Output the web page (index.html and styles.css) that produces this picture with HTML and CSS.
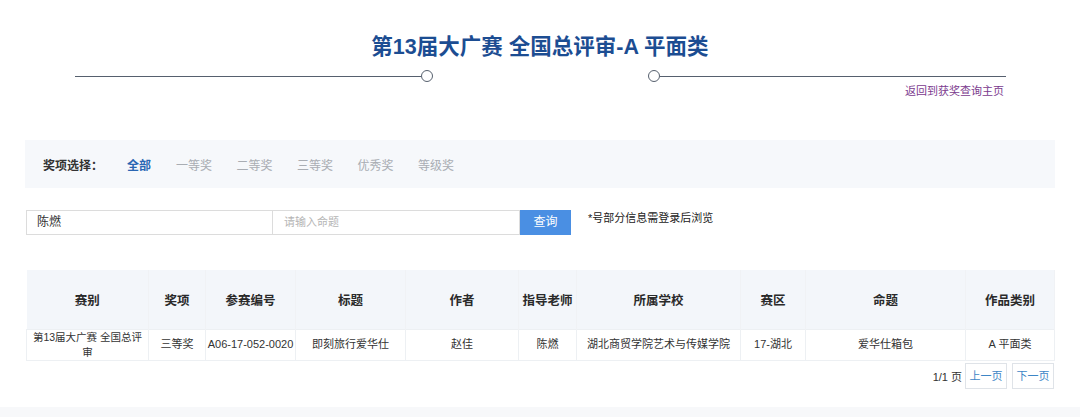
FILE: index.html
```html
<!DOCTYPE html>
<html lang="zh">
<head>
<meta charset="utf-8">
<link rel="stylesheet" href="styles.css">
</head>
<body>
<div class="page">
  <header class="head">
    <h1 class="title">第13届大广赛 全国总评审-A 平面类</h1>
    <div class="deco">
      <span class="line"></span><span class="dot"></span><span class="gap"></span><span class="dot"></span><span class="line"></span>
    </div>
    <div class="back"><a href="#">返回到获奖查询主页</a></div>
  </header>

  <div class="filter">
    <span class="flabel">奖项选择：</span>
    <span class="fitem active">全部</span>
    <span class="fitem">一等奖</span>
    <span class="fitem">二等奖</span>
    <span class="fitem">三等奖</span>
    <span class="fitem">优秀奖</span>
    <span class="fitem">等级奖</span>
  </div>

  <div class="search">
    <div class="inp">陈燃</div>
    <div class="inp ph">请输入命题</div>
    <div class="btn">查询</div>
    <div class="note">*号部分信息需登录后浏览</div>
  </div>

  <table class="tbl">
    <colgroup>
      <col style="width:122px"><col style="width:57px"><col style="width:90px"><col style="width:110px"><col style="width:113px"><col style="width:58px"><col style="width:164px"><col style="width:65px"><col style="width:160px"><col style="width:89px">
    </colgroup>
    <thead>
      <tr><th>赛别</th><th>奖项</th><th>参赛编号</th><th>标题</th><th>作者</th><th>指导老师</th><th>所属学校</th><th>赛区</th><th>命题</th><th>作品类别</th></tr>
    </thead>
    <tbody>
      <tr><td class="wrap">第13届大广赛 全国总评审</td><td>三等奖</td><td class="nw">A06-17-052-0020</td><td>即刻旅行爱华仕</td><td>赵佳</td><td>陈燃</td><td>湖北商贸学院艺术与传媒学院</td><td>17-湖北</td><td>爱华仕箱包</td><td>A 平面类</td></tr>
    </tbody>
  </table>

  <div class="pager">
    <span class="pinfo">1/1 页</span>
    <span class="pbtn">上一页</span>
    <span class="pbtn">下一页</span>
  </div>
</div>
<div class="foot"></div>
</body>
</html>
```

FILE: styles.css
```css
* { box-sizing: border-box; }
html, body { margin: 0; padding: 0; background: #fff; }
body {
  font-family: "Liberation Sans", "Noto Sans CJK SC", sans-serif;
  color: #333;
  width: 1080px;
  height: 417px;
  overflow: hidden;
  position: relative;
}
.page { padding: 0 25px; }
.head { padding-top: 32px; }
.title {
  margin: 0;
  text-align: center;
  font-size: 21.5px;
  line-height: 30px;
  font-weight: 700;
  color: #1c4d92;
}
.deco {
  display: flex;
  align-items: center;
  margin: 8px 0 0 50px;
  width: 931px;
  height: 12px;
}
.line { width: 346px; height: 1px; background: #56606e; }
.gap { width: 215px; }
.dot {
  width: 12px; height: 12px;
  border: 1px solid #56606e;
  border-radius: 50%;
  background: #fff;
}
.back {
  width: 979px;
  text-align: right;
  font-size: 11px;
  line-height: 16px;
  margin-top: 1px;
}
.back a { color: #7b3a8e; text-decoration: none; }

.filter {
  margin-top: 41px;
  height: 48px;
  background: #f6f8fb;
  display: flex;
  align-items: center;
  padding-left: 18px;
  font-size: 12px;
}
.flabel { font-weight: 700; color: #333; width: 84px; }
.fitem { color: #a9adb3; width: 60.5px; }
.fitem.active { color: #2a66b3; font-weight: 700; width: 49px; }

.search {
  margin: 22px 1px 0;
  display: flex;
  align-items: flex-start;
  height: 25px;
}
.inp {
  width: 247px; height: 25px;
  border: 1px solid #dcdcdc;
  font-size: 12px;
  line-height: 23px;
  padding-left: 10px;
  color: #333;
}
.inp + .inp { border-left: none; }
.inp.ph { color: #b5b5b5; font-size: 11px; padding-left: 11px; }
.btn {
  width: 51px; height: 25px;
  background: #4a8fe3;
  color: #fff;
  font-size: 12px;
  line-height: 25px;
  text-align: center;
}
.note { margin-left: 17px; font-size: 11px; line-height: 16px; color: #222; }

.tbl {
  margin: 35px 1px 0;
  width: 1028px;
  border-collapse: collapse;
  table-layout: fixed;
  font-size: 11px;
}
.tbl th {
  background: #f3f6fa;
  height: 59px;
  font-weight: 700;
  font-size: 12.5px;
  color: #2a2a2a;
  border-right: 1px solid #f0f2f5;
  padding: 0;
}
.tbl td {
  height: 31px;
  text-align: center;
  color: #333;
  border: 1px solid #edf0f3;
  padding: 0 2px;
  line-height: 15px;
}
.tbl td.wrap { padding: 0 1px; font-size: 10.5px; }
.tbl td.nw { white-space: nowrap; padding: 0; }

.pager {
  margin: 2px 1px 0;
  display: flex;
  justify-content: flex-end;
  align-items: center;
  gap: 5px;
  font-size: 11px;
}
.pinfo { color: #333; margin-right: -2px; }
.pbtn {
  width: 42px; height: 26px;
  border: 1px solid #dfe3e8;
  color: #3d86c6;
  line-height: 24px;
  text-align: center;
}
.foot {
  position: absolute;
  left: 0; right: 0; bottom: 0;
  height: 10px;
  background: #f7f8fa;
}
```
